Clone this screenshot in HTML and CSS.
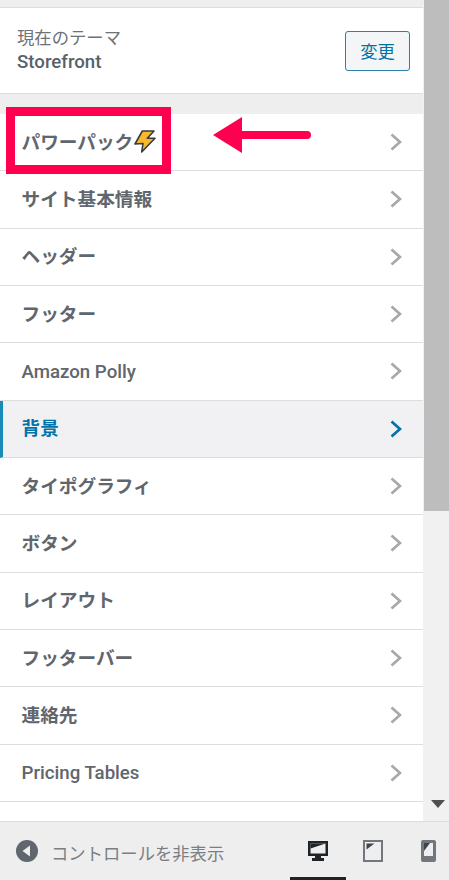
FILE: index.html
```html
<!DOCTYPE html>
<html lang="ja">
<head>
<meta charset="utf-8">
<title>カスタマイズ</title>
<link rel="stylesheet" href="styles.css">
</head>
<body>
<div class="app">
  <div class="sidebar">
    <main class="panel">
      <div class="topband"></div>
      <section class="theme">
        <div class="theme-text">
          <div class="theme-label">現在のテーマ</div>
          <div class="theme-name">Storefront</div>
        </div>
        <button class="change">変更</button>
      </section>
      <div class="gap"></div>
      <ul class="list">
        <li class="row"><span class="label">パワーパック<svg class="bolt" viewBox="0 0 24 24" width="24" height="24"><path d="M21 1H9.300L2 14l8-.5L8.700 22 22 8.300h-7.700z" fill="#f5b82e" stroke="#3a3a3a" stroke-width="1.600" stroke-linejoin="round"/></svg></span><svg class="chev" viewBox="0 0 12 18"><path d="M1.500 1.500 10 9l-8.500 7.500" /></svg></li>
        <li class="row"><span class="label">サイト基本情報</span><svg class="chev" viewBox="0 0 12 18"><path d="M1.500 1.500 10 9l-8.500 7.500" /></svg></li>
        <li class="row"><span class="label">ヘッダー</span><svg class="chev" viewBox="0 0 12 18"><path d="M1.500 1.500 10 9l-8.500 7.500" /></svg></li>
        <li class="row"><span class="label">フッター</span><svg class="chev" viewBox="0 0 12 18"><path d="M1.500 1.500 10 9l-8.500 7.500" /></svg></li>
        <li class="row"><span class="label latin">Amazon Polly</span><svg class="chev" viewBox="0 0 12 18"><path d="M1.500 1.500 10 9l-8.500 7.500" /></svg></li>
        <li class="row active"><span class="label">背景</span><svg class="chev" viewBox="0 0 12 18"><path d="M1.500 1.500 10 9l-8.500 7.500" /></svg></li>
        <li class="row"><span class="label">タイポグラフィ</span><svg class="chev" viewBox="0 0 12 18"><path d="M1.500 1.500 10 9l-8.500 7.500" /></svg></li>
        <li class="row"><span class="label">ボタン</span><svg class="chev" viewBox="0 0 12 18"><path d="M1.500 1.500 10 9l-8.500 7.500" /></svg></li>
        <li class="row"><span class="label">レイアウト</span><svg class="chev" viewBox="0 0 12 18"><path d="M1.500 1.500 10 9l-8.500 7.500" /></svg></li>
        <li class="row"><span class="label">フッターバー</span><svg class="chev" viewBox="0 0 12 18"><path d="M1.500 1.500 10 9l-8.500 7.500" /></svg></li>
        <li class="row"><span class="label">連絡先</span><svg class="chev" viewBox="0 0 12 18"><path d="M1.500 1.500 10 9l-8.500 7.500" /></svg></li>
        <li class="row"><span class="label latin">Pricing Tables</span><svg class="chev" viewBox="0 0 12 18"><path d="M1.500 1.500 10 9l-8.500 7.500" /></svg></li>
        <li class="row"><span class="label">ページ</span><svg class="chev" viewBox="0 0 12 18"><path d="M1.500 1.500 10 9l-8.500 7.500" /></svg></li>
      </ul>
    </main>
    <div class="scrollbar">
      <div class="thumb"></div>
      <div class="track"></div>
      <div class="down"></div>
    </div>
  </div>
  <footer class="footer">
    <div class="collapse">
      <svg class="back" viewBox="0 0 22 22" width="22" height="22"><circle cx="11" cy="11" r="11" fill="#5f666d"/><path d="M14 5.500v11L6.500 11z" fill="#eee"/></svg>
      <span class="collapse-text">コントロールを非表示</span>
    </div>
    <div class="devices">
      <div class="device on">
        <svg viewBox="0 0 22 22" width="22" height="22"><path d="M1 1h20v15H14v2h3v3H5v-3h3v-2H1z" fill="#1d2327"/><path d="M3.500 3.500h15v10h-15z" fill="#eee"/><path d="M3.500 3.500h15l-15 5z" fill="#1d2327"/></svg>
      </div>
      <div class="device">
        <svg viewBox="0 0 20 22" width="20" height="22"><path d="M1 1h18v20H1z" fill="#eee" stroke="#71777d" stroke-width="2"/><path d="M3.500 3.500h8l-8 6z" fill="#3f454a"/></svg>
      </div>
      <div class="device">
        <svg viewBox="0 0 15 22" width="15" height="22"><path d="M2 0h11a2 2 0 0 1 2 2v18a2 2 0 0 1-2 2H2a2 2 0 0 1-2-2V2a2 2 0 0 1 2-2z" fill="#71777d"/><path d="M3 3h9v13H3z" fill="#eee"/><path d="M3 3h6l-6 8z" fill="#3f454a"/></svg>
      </div>
    </div>
  </footer>
  <div class="frame"></div>
  <svg class="arrow" viewBox="0 0 98 38" width="98" height="38"><path d="M0 19 29 1v14h65a3.500 3.500 0 0 1 0 8H29v14z" fill="#ff0050"/></svg>
</div>
</body>
</html>
```
FILE: styles.css
```css
* { box-sizing: border-box; }
html, body { margin: 0; padding: 0; }
body { font-family: "Noto Sans CJK JP", "Noto Sans", sans-serif; background: #eee; overflow: hidden; }
.app { position: relative; width: 449px; height: 880px; display: flex; flex-direction: column; }
.sidebar { height: 821px; display: flex; overflow: hidden; }
.panel { width: 423px; overflow: hidden; }
.topband { height: 8px; background: #eee; border-bottom: 1px solid #ddd; }
.theme { height: 86px; background: #fff; border-bottom: 1px solid #ddd; display: flex; align-items: center; justify-content: space-between; padding: 0 13px 0 17px; }
.theme-label { font-size: 17.33px; line-height: 24px; color: #6d7277; margin-top: -3px; }
.theme-name { font-size: 18.67px; line-height: 24px; font-weight: 500; color: #5a6168; font-family: Roboto, "Noto Sans", sans-serif; margin-top: 1px; }
.change { width: 65px; height: 40px; border: 1px solid #2d7fa8; border-radius: 3px; background: #f3f5f6; color: #0071a1; font: 17.33px "Noto Sans CJK JP", sans-serif; padding: 0; }
.gap { height: 20px; background: #eee; }
.list { list-style: none; margin: 0; padding: 0; }
.row { height: 57.33px; background: #fff; border-bottom: 1px solid #ddd; display: flex; align-items: center; justify-content: space-between; padding: 0 21px 0 21.500px; }
.label { display: flex; align-items: center; font-size: 18.67px; font-weight: 700; color: #5f666d; margin-bottom: 4px; }
.latin { font-family: Roboto, "Noto Sans", sans-serif; font-weight: 500; margin-bottom: 0; margin-top: 1px; }
.chev { width: 12px; height: 18px; fill: none; stroke: #a7aaad; stroke-width: 2.800; }
.active { background: #f1f1f3; border-left: 3px solid #1a8ab8; padding-left: 18.500px; }
.active .label { color: #0073aa; }
.active .chev { stroke: #0073aa; }
.bolt { flex: none; margin-top: 4px; }
.scrollbar { width: 26px; display: flex; flex-direction: column; position: relative; background: #f1f1f1; padding-left: 1px; }
.thumb { height: 511px; background: #bdbdbd; }
.track { flex: 1; }
.down { position: absolute; left: 8px; top: 800px; width: 0; height: 0; border-left: 7.500px solid transparent; border-right: 7.500px solid transparent; border-top: 8px solid #505050; }
.footer { flex: 1; background: #eee; border-top: 1px solid #ddd; display: flex; align-items: center; justify-content: space-between; position: relative; }
.collapse { display: flex; align-items: center; gap: 13px; padding-left: 16px; font-size: 17.33px; color: #7a7f84; }
.collapse-text { margin-top: 2px; }
.devices { display: flex; align-self: stretch; width: 159px; overflow: hidden; flex: none; }
.device { flex: none; width: 55.500px; display: flex; align-items: center; justify-content: center; border-top: 3px solid transparent; border-bottom: 3px solid transparent; }
.device.on { border-bottom-color: #1d2327; }
.frame { position: absolute; left: 6px; top: 107px; width: 165px; height: 67px; border: 9.500px solid #ff0050; }
.arrow { position: absolute; left: 213px; top: 116px; }
```
